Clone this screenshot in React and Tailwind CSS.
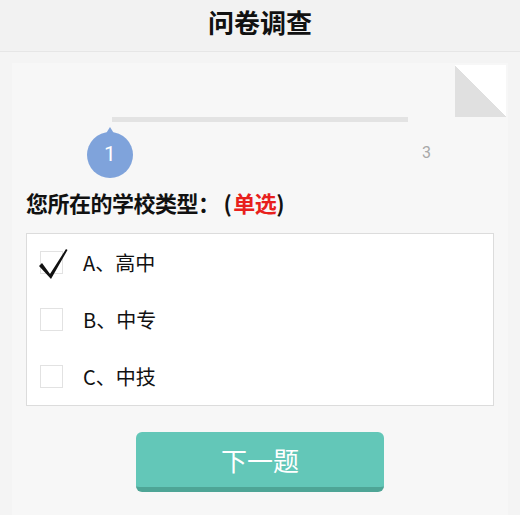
export default function App() {
  const options = [
    { id: "A", label: "A、高中", checked: true },
    { id: "B", label: "B、中专", checked: false },
    { id: "C", label: "C、中技", checked: false },
  ];

  return (
    <div
      className="w-[520px] h-[515px] overflow-hidden bg-[#f4f4f4] flex flex-col"
      style={{ fontFamily: "'Noto Sans CJK SC', 'Noto Sans', sans-serif" }}
    >
      {/* header */}
      <div className="h-[52px] shrink-0 flex items-center justify-center bg-[#f2f2f2] border-b border-[#e6e6e6]">
        <h1 className="text-[26px] font-bold text-[#111] leading-none -mt-[8px]">问卷调查</h1>
      </div>

      {/* panel */}
      <div className="flex-1 mx-[12px] mt-[11px] bg-[#f7f7f7] flex flex-col">
        {/* progress */}
        <div className="relative h-[118px]">
          <div className="absolute right-[2px] top-[2px] w-[51px] h-[52px] bg-[linear-gradient(to_top_right,#e0e0e0_50%,#ffffff_50%)]" />
          <div className="absolute left-[100px] top-[54px] w-[296px] h-[5px] bg-[#e3e3e3]" />
          <div className="absolute left-[75px] top-[64px] w-[46px] h-[52px]">
            <div className="absolute left-[18px] top-0 w-0 h-0 border-x-[5px] border-x-transparent border-b-[8px] border-b-[#7fa3db]" />
            <div className="absolute left-0 top-[5px] w-[46px] h-[46px] rounded-full bg-[#7fa3db] flex items-center justify-center text-white text-[21px] leading-none" style={{ fontFamily: "'Roboto', sans-serif" }}>
              <span className="-mt-[2px]">1</span>
            </div>
          </div>
          <div className="absolute left-[410px] top-[82px] text-[16px] text-[#a8a8a8] leading-none" style={{ fontFamily: "'Roboto', sans-serif" }}>3</div>
        </div>

        {/* question */}
        <div className="pl-[14px] pr-[14px]">
          <p className="text-[22px] font-bold text-[#111] leading-none mt-[10px] tracking-[-0.5px] flex items-center">
            <span>您所在的学校类型：</span>
            <span className="ml-[4px]">(</span>
            <span className="ml-[2px] text-[#e8201c]">单选</span>
            <span>)</span>
          </p>

          <div className="mt-[20px] bg-white border border-[#dcdcdc]">
            {options.map((o) => (
              <div key={o.id} className="h-[57px] flex items-center pl-[13px]">
                <div className="relative w-[23px] h-[23px] border border-[#e2e2e2] shrink-0">
                  {o.checked && (
                    <svg className="absolute -left-[3px] -top-[4px]" width="32" height="32" viewBox="0 0 32 32">
                      <path d="M1 18 L4 15 L12 26 L28 1 L29.5 2 L13 31 Z" fill="#111" />
                    </svg>
                  )}
                </div>
                <span className="ml-[20px] text-[20px] text-[#111] leading-none">{o.label}</span>
              </div>
            ))}
          </div>
        </div>

        {/* next button */}
        <div className="flex justify-center mt-[26px]">
          <button className="w-[248px] h-[60px] rounded-[6px] bg-[#63c7b8] border-b-[5px] border-[#4ea596] text-white text-[26px] leading-none flex items-center justify-center pt-[1px]">
            下一题
          </button>
        </div>
      </div>
    </div>
  );
}
